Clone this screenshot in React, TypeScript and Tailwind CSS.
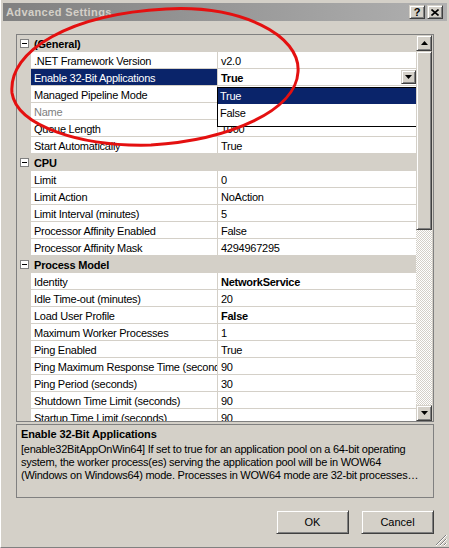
import React from "react";

const raised =
  "border border-t-[#d4d0c8] border-l-[#d4d0c8] border-r-[#404040] border-b-[#404040] shadow-[inset_1px_1px_#ffffff,inset_-1px_-1px_#808080] bg-[#d4d0c8]";

function DownTri() {
  return (
    <svg width="7" height="4" viewBox="0 0 7 4">
      <path d="M0 0h7L3.5 4z" fill="#000" />
    </svg>
  );
}
function UpTri() {
  return (
    <svg width="7" height="4" viewBox="0 0 7 4">
      <path d="M0 4h7L3.5 0z" fill="#000" />
    </svg>
  );
}

function ExpandBox() {
  return (
    <div className="w-[9px] h-[9px] border border-[#808080] bg-white flex items-center justify-center">
      <div className="w-[5px] h-[1px] bg-black" />
    </div>
  );
}

function Header({ title }: { title: string }) {
  return (
    <div className="flex h-[17px] items-center bg-[#d4d0c8] shrink-0">
      <div className="w-[14px] flex justify-center">
        <ExpandBox />
      </div>
      <span className="pl-[3px] pt-[1px] font-bold tracking-[-0.2px]">{title}</span>
    </div>
  );
}

type RowProps = {
  label: string;
  value: string;
  bold?: boolean;
  gray?: boolean;
  selected?: boolean;
  dropdown?: boolean;
};

function Row({ label, value, bold, gray, selected, dropdown }: RowProps) {
  return (
    <div className="flex h-[17px] shrink-0">
      <div className="w-[14px] shrink-0 bg-[#d4d0c8]" />
      <div
        className={`w-[186px] shrink-0 border-b border-[#d4d0c8] pl-[3px] leading-[18px] whitespace-nowrap overflow-hidden tracking-[-0.25px] ${
          selected ? "bg-[#0a246a] text-white" : gray ? "bg-white text-[#808080]" : "bg-white text-black"
        }`}
      >
        {label}
      </div>
      <div className="w-[1px] shrink-0 bg-[#d4d0c8]" />
      <div className="flex-1 flex bg-white border-b border-[#d4d0c8] whitespace-nowrap overflow-hidden">
        <span className={`flex-1 pl-[3px] leading-[18px] tracking-[-0.25px] ${bold ? "font-bold" : ""}`}>{value}</span>
        {dropdown && (
          <div className={`w-[15px] h-[14px] mt-[1px] flex items-center justify-center ${raised}`}>
            <DownTri />
          </div>
        )}
      </div>
    </div>
  );
}

function Ellipse() {
  return (
    <svg className="absolute left-0 top-0 pointer-events-none" width="449" height="160" viewBox="0 0 449 160">
      <path
        d="M11 93 C7 50 70 14 165 9 C240 5 300 35 297 72 C295 110 230 140 150 145 C80 147 16 126 11 93 Z"
        fill="none"
        stroke="#e41010"
        strokeWidth="3"
      />
    </svg>
  );
}

export default function App() {
  return (
    <div className="w-[449px] h-[548px] bg-[#d4d0c8] relative flex flex-col overflow-hidden font-['Liberation_Sans',Arial,sans-serif] text-[11px] text-black border-l border-l-white border-b border-b-[#808080]">
      {/* Title bar */}
      <div className="px-[2px] pt-[3px]">
        <div className="h-[18px] flex items-center justify-between pl-[3px] pr-[4px] bg-linear-to-r from-[#808080] to-[#b0b0b0]">
          <span className="font-bold text-[#d4d0c8] text-[11px] tracking-[0.4px]">Advanced Settings</span>
          <div className="flex gap-[2px]">
            <div className={`w-[16px] h-[14px] flex items-center justify-center font-bold text-[11px] leading-none ${raised}`}>?</div>
            <div className={`w-[16px] h-[14px] flex items-center justify-center ${raised}`}>
              <svg width="8" height="7" viewBox="0 0 8 7">
                <path d="M0.5 0.5L7.5 6.5M7.5 0.5L0.5 6.5" stroke="#000" strokeWidth="1.6" />
              </svg>
            </div>
          </div>
        </div>
      </div>

      {/* Property grid */}
      <div className="mt-[13px] mx-[15px] h-[388px] border border-[#808080] flex">
        <div className="relative w-[399px] flex flex-col overflow-hidden bg-[#d4d0c8]">
          <Header title="(General)" />
          <Row label=".NET Framework Version" value="v2.0" />
          <Row label="Enable 32-Bit Applications" value="True" bold selected dropdown />
          <Row label="Managed Pipeline Mode" value="" />
          <Row label="Name" value="" gray />
          <Row label="Queue Length" value="1000" />
          <Row label="Start Automatically" value="True" />
          <Header title="CPU" />
          <Row label="Limit" value="0" />
          <Row label="Limit Action" value="NoAction" />
          <Row label="Limit Interval (minutes)" value="5" />
          <Row label="Processor Affinity Enabled" value="False" />
          <Row label="Processor Affinity Mask" value="4294967295" />
          <Header title="Process Model" />
          <Row label="Identity" value="NetworkService" bold />
          <Row label="Idle Time-out (minutes)" value="20" />
          <Row label="Load User Profile" value="False" bold />
          <Row label="Maximum Worker Processes" value="1" />
          <Row label="Ping Enabled" value="True" />
          <Row label="Ping Maximum Response Time (seconds)" value="90" />
          <Row label="Ping Period (seconds)" value="30" />
          <Row label="Shutdown Time Limit (seconds)" value="90" />
          <Row label="Startup Time Limit (seconds)" value="90" />

          {/* Dropdown list */}
          <div className="absolute left-[200px] top-[52px] w-[200px] h-[40px] border border-black bg-white">
            <div className="h-[16px] bg-[#0a246a] text-white pl-[2px] leading-[17px] tracking-[-0.25px]">True</div>
            <div className="h-[17px] pl-[2px] leading-[18px] tracking-[-0.25px]">False</div>
          </div>
        </div>
        {/* Scrollbar */}
        <div className="w-[16px] flex flex-col">
          <div className={`h-[16px] flex items-center justify-center ${raised}`}>
            <UpTri />
          </div>
          <div className={`h-[179px] ${raised}`} />
          <div className="flex-1 bg-[image:repeating-conic-gradient(#ffffff_0%_25%,#d4d0c8_0%_50%)] bg-[length:2px_2px]" />
          <div className={`h-[16px] flex items-center justify-center ${raised}`}>
            <DownTri />
          </div>
        </div>
      </div>

      {/* Description */}
      <div className="mt-[2px] mx-[15px] h-[74px] border border-[#808080] pl-[4px] pt-[2px]">
        <div className="font-bold leading-[14px] tracking-[-0.1px]">Enable 32-Bit Applications</div>
        <div className="mt-[2px] leading-[13px] whitespace-nowrap tracking-[-0.25px]">
          <div>[enable32BitAppOnWin64] If set to true for an application pool on a 64-bit operating</div>
          <div>system, the worker process(es) serving the application pool will be in WOW64</div>
          <div>(Windows on Windows64) mode. Processes in WOW64 mode are 32-bit processes…</div>
        </div>
      </div>

      {/* Buttons */}
      <div className="mt-[12px] mr-[15px] flex justify-end gap-[12px]">
        <div className={`w-[73px] h-[24px] flex items-center justify-center ${raised}`}>OK</div>
        <div className={`w-[73px] h-[24px] flex items-center justify-center ${raised}`}>Cancel</div>
      </div>

      {/* Size grip */}
      <svg className="absolute right-[2px] bottom-[1px]" width="12" height="12" viewBox="0 0 12 12">
        <path d="M11 1L1 11M11 5L5 11M11 9L9 11" stroke="#808080" strokeWidth="1" />
        <path d="M12 1L1 12M12 5L5 12M12 9L9 12" stroke="#ffffff" strokeWidth="1" />
      </svg>

      <Ellipse />
    </div>
  );
}
